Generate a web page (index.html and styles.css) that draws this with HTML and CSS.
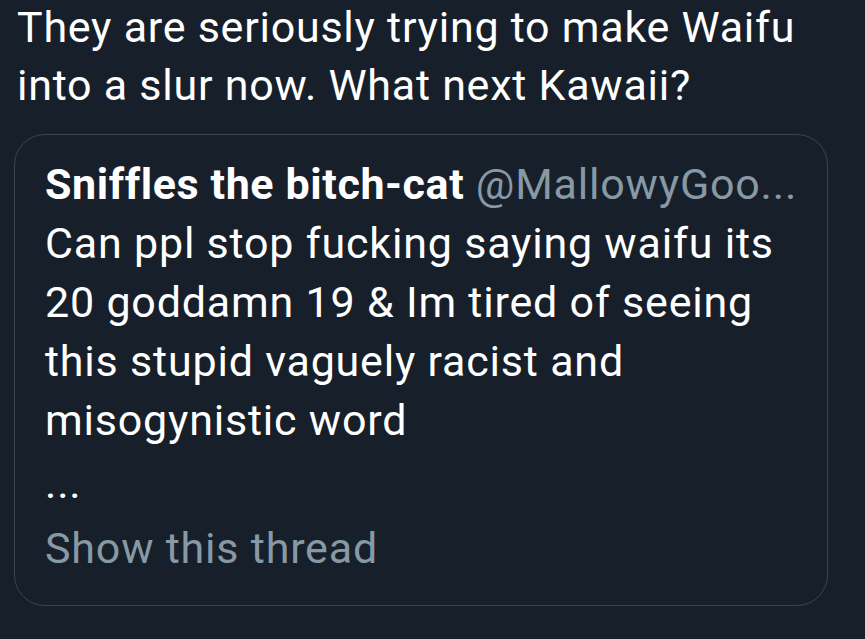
FILE: index.html
```html
<!DOCTYPE html>
<html>
<head>
<meta charset="utf-8">
<link rel="stylesheet" href="styles.css">
</head>
<body>
<div class="tweet">
  <p class="tweet-text">They are seriously trying to make Waifu into a slur now. What next Kawaii?</p>
  <div class="quote">
    <div class="quote-head"><span class="name">Sniffles the bitch-cat</span> <span class="handle">@MallowyGoo...</span></div>
    <p class="quote-text">Can ppl stop fucking saying waifu its 20 goddamn 19 &amp; Im tired of seeing this stupid vaguely racist and misogynistic word</p>
    <div class="ellipsis">...</div>
    <div class="thread">Show this thread</div>
  </div>
</div>
</body>
</html>
```
FILE: styles.css
```css
html, body {
  margin: 0;
  padding: 0;
  background: #17202a;
  height: 100%;
}
body {
  font-family: Roboto, "Noto Sans", sans-serif;
  color: #ffffff;
  overflow: hidden;
}
.tweet {
  padding: 0 0 0 17px;
  width: 830px;
}
.tweet-text {
  margin: -2px 0 0 0;
  font-size: 43px;
  line-height: 58px;
  letter-spacing: 0.75px;
  width: 820px;
}
.quote {
  margin: 20px 0 0 -3px;
  width: 782px;
  border: 1px solid #38444d;
  border-radius: 31px;
  padding: 0 0 27px 30px;
  font-size: 43px;
  line-height: 59px;
  letter-spacing: 0.8px;
}
.quote-head {
  margin-top: 20px;
  white-space: nowrap;
}
.name {
  font-weight: 700;
  letter-spacing: 0.6px;
}
.handle {
  color: #8899a6;
}
.quote-text {
  margin: 0;
  width: 750px;
}
.ellipsis {
  margin-top: 4px;
}
.thread {
  margin-top: 6px;
  color: #8899a6;
}
```
